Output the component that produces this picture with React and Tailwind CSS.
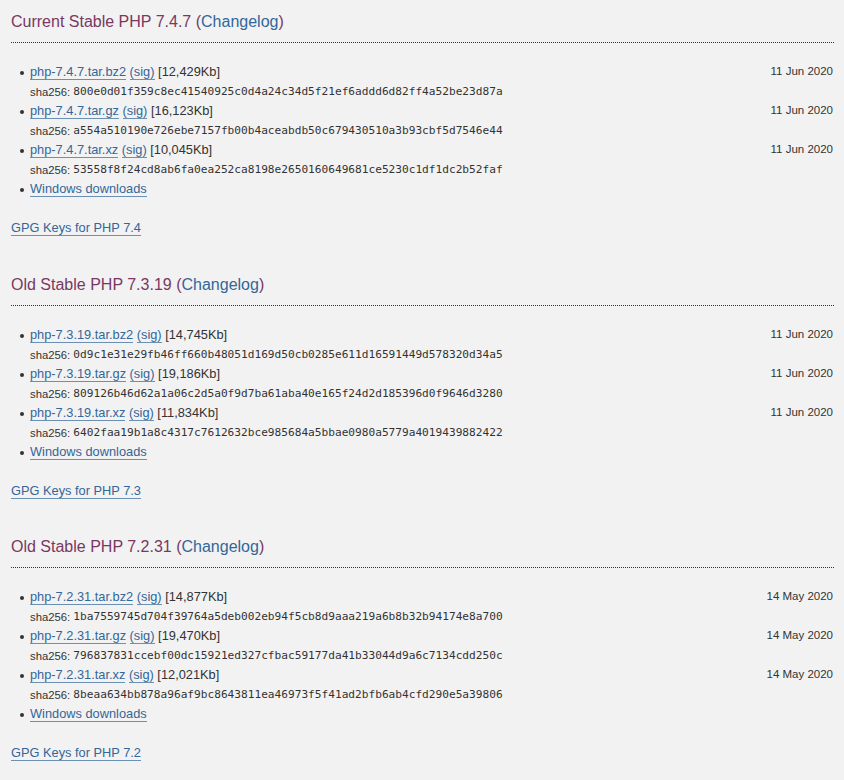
import React from "react";

const sections = [
  {
    title: "Current Stable PHP 7.4.7",
    gpg: "7.4",
    files: [
      ["php-7.4.7.tar.bz2", "12,429Kb", "800e0d01f359c8ec41540925c0d4a24c34d5f21ef6addd6d82ff4a52be23d87a", "11 Jun 2020"],
      ["php-7.4.7.tar.gz", "16,123Kb", "a554a510190e726ebe7157fb00b4aceabdb50c679430510a3b93cbf5d7546e44", "11 Jun 2020"],
      ["php-7.4.7.tar.xz", "10,045Kb", "53558f8f24cd8ab6fa0ea252ca8198e2650160649681ce5230c1df1dc2b52faf", "11 Jun 2020"],
    ],
  },
  {
    title: "Old Stable PHP 7.3.19",
    gpg: "7.3",
    files: [
      ["php-7.3.19.tar.bz2", "14,745Kb", "0d9c1e31e29fb46ff660b48051d169d50cb0285e611d16591449d578320d34a5", "11 Jun 2020"],
      ["php-7.3.19.tar.gz", "19,186Kb", "809126b46d62a1a06c2d5a0f9d7ba61aba40e165f24d2d185396d0f9646d3280", "11 Jun 2020"],
      ["php-7.3.19.tar.xz", "11,834Kb", "6402faa19b1a8c4317c7612632bce985684a5bbae0980a5779a4019439882422", "11 Jun 2020"],
    ],
  },
  {
    title: "Old Stable PHP 7.2.31",
    gpg: "7.2",
    files: [
      ["php-7.2.31.tar.bz2", "14,877Kb", "1ba7559745d704f39764a5deb002eb94f5cb8d9aaa219a6b8b32b94174e8a700", "14 May 2020"],
      ["php-7.2.31.tar.gz", "19,470Kb", "796837831ccebf00dc15921ed327cfbac59177da41b33044d9a6c7134cdd250c", "14 May 2020"],
      ["php-7.2.31.tar.xz", "12,021Kb", "8beaa634bb878a96af9bc8643811ea46973f5f41ad2bfb6ab4cfd290e5a39806", "14 May 2020"],
    ],
  },
];

function A({ children }) {
  return (
    <a href="#" className="text-[#369] border-b border-[#369]/70 leading-[15px] inline-block">
      {children}
    </a>
  );
}

function Bullet() {
  return (
    <span className="w-[19px] shrink-0 flex justify-end pr-[6px] pt-[9px]">
      <span className="block w-[4px] h-[4px] rounded-full bg-[#333]" />
    </span>
  );
}

function Section({ s }) {
  return (
    <div className="pt-[10px]">
      <h3 className="text-[16px] leading-[24px] text-[#793862] pb-[8px] border-b border-dotted border-[#333]">
        {s.title} (<a href="#" className="text-[#369]">Changelog</a>)
      </h3>
      <ul className="mt-[19px]">
        {s.files.map((f) => (
          <li key={f[0]} className="flex">
            <Bullet />
            <div className="flex-1">
              <div className="flex justify-between h-[20px] items-center">
                <span>
                  <A>{f[0]}</A> <A>(sig)</A> [{f[1]}]
                </span>
                <span className="text-[11.5px] mr-[1px]">{f[3]}</span>
              </div>
              <div className="h-[19px] pt-[2px] flex items-center text-[11.3px]">
                <span>sha256:&nbsp;</span>
                <span className="font-['DejaVu_Sans_Mono',monospace] text-[11.15px]">{f[2]}</span>
              </div>
            </div>
          </li>
        ))}
        <li className="flex">
          <Bullet />
          <div className="h-[20px] flex items-center">
            <A>Windows downloads</A>
          </div>
        </li>
      </ul>
      <div className="mt-[19px] h-[20px] flex items-center">
        <A>GPG Keys for PHP {s.gpg}</A>
      </div>
      <div className="h-[24.5px]" />
    </div>
  );
}

export default function App() {
  return (
    <div className="min-h-[780px] bg-[#f2f2f2] text-[#333] text-[12.8px] font-['Liberation_Sans',Arial,sans-serif] pl-[11px] pr-[10px]">
      {sections.map((s) => (
        <Section key={s.title} s={s} />
      ))}
    </div>
  );
}
